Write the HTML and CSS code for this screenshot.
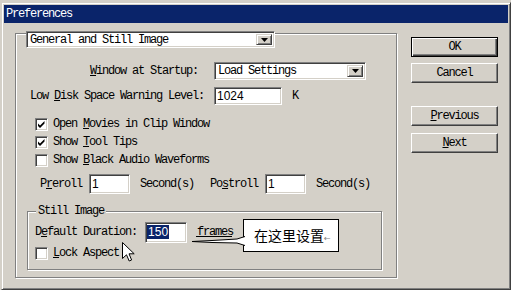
FILE: index.html
```html
<!DOCTYPE html>
<html>

<head>
	<meta charset="utf-8">
	<link rel="stylesheet" href="styles.css">
</head>

<body>
	<div class="window">
		<div class="titlebar">Preferences</div>
		<div class="client">
			<div class="panel">
				<div class="combo section-combo">
					<span class="combo-text">General and Still Image</span>
					<span class="drop"><svg width="7" height="4" viewBox="0 0 7 4"><path d="M0 0h7L3.5 4z" fill="#000"/></svg></span>
				</div>
				<div class="row startup">
					<span class="label"><u>W</u>indow at Startup:</span>
					<div class="combo startup-combo">
						<span class="combo-text">Load Settings</span>
						<span class="drop"><svg width="7" height="4" viewBox="0 0 7 4"><path d="M0 0h7L3.5 4z" fill="#000"/></svg></span>
					</div>
				</div>
				<div class="row disk">
					<span class="label">Low <u>D</u>isk Space Warning Level:</span>
					<span class="field disk-field">1024</span>
					<span class="unit">K</span>
				</div>
				<div class="checks">
					<div class="check">
						<span class="box"><svg width="9" height="9" viewBox="0 0 9 9"><path d="M1 3.5L3 5.5L7.5 1V3.5L3 8L1 6z" fill="#000"/></svg></span>
						<span>Open <u>M</u>ovies in Clip Window</span>
					</div>
					<div class="check">
						<span class="box"><svg width="9" height="9" viewBox="0 0 9 9"><path d="M1 3.5L3 5.5L7.5 1V3.5L3 8L1 6z" fill="#000"/></svg></span>
						<span>Show <u>T</u>ool Tips</span>
					</div>
					<div class="check">
						<span class="box"></span>
						<span>Show <u>B</u>lack Audio Waveforms</span>
					</div>
				</div>
				<div class="row roll">
					<span>P<u>r</u>eroll</span>
					<span class="field roll-field">1</span>
					<span class="seconds">Second(s)</span>
					<span class="postroll">Po<u>s</u>troll</span>
					<span class="field roll-field">1</span>
					<span class="seconds">Second(s)</span>
				</div>
				<div class="group">
					<span class="legend">Still Image</span>
					<div class="row duration">
						<span>D<u>e</u>fault Duration:</span>
						<span class="field duration-field"><span class="selected">150</span></span>
						<span class="frames">frames</span>
					</div>
					<div class="check lock">
						<span class="box"></span>
						<span><u>L</u>ock Aspect</span>
					</div>
				</div>

				<svg class="cursor" width="13" height="20" viewBox="0 0 13 20"><path d="M0.5 0.5V16.5L4.5 12.8L7.2 19L9.6 18L7 11.8H12.2z" fill="#fff" stroke="#000" stroke-linejoin="miter"/></svg>
				<div class="callout">在这里设置<span class="mark">←</span></div>
				<svg class="leader" width="58" height="16" viewBox="0 0 58 16">
					<path d="M2 8.5L22 7.5L47 6L55 3.5V12.5L47 10L22 9.5z" fill="#fff"/>
					<path d="M2 8.5L22 7.5L47 6L55 3.5M2 8.5L22 9.5L47 10L55 12.5M6 3.5H42" fill="none" stroke="#000"/>
				</svg>
			</div>
			<div class="buttons">
				<div class="btn default">OK</div>
				<div class="btn cancel">Cancel</div>
				<div class="btn previous"><u>P</u>revious</div>
				<div class="btn next"><u>N</u>ext</div>
			</div>
		</div>
	</div>
</body>

</html>
```

FILE: styles.css
```css
body {
	margin: 0;
	background-color: #d4d0c8;
	width: 511px;
	height: 290px;
	overflow: hidden;
}

.window {
	box-sizing: border-box;
	margin: 2px 0 0 1px;
	width: 510px;
	height: 288px;
	padding: 2px;
	border: 1px solid;
	border-color: #d4d0c8 #404040 #404040 #d4d0c8;
	box-shadow: inset 1px 1px #fff, inset -1px -1px #808080;
	font-family: "Liberation Mono", monospace;
	font-size: 12px;
	letter-spacing: -1.2px;
	color: #000;
}

.titlebar {
	height: 18px;
	line-height: 18px;
	padding-left: 2px;
	background-color: #0a246a;
	color: #fff;
}

.client {
	display: flex;
	align-items: flex-start;
}

.panel {
	position: relative;
	box-sizing: border-box;
	margin: 10px 0 0 11px;
	width: 382px;
	height: 245px;
	border: 1px solid #808080;
	box-shadow: inset 1px 1px #fff, 1px 1px #fff;
}

/* sunken controls */
.combo,
.field,
.box {
	box-sizing: border-box;
	background-color: #fff;
	border: 1px solid;
	border-color: #808080 #fff #fff #808080;
	box-shadow: inset 1px 1px #404040, inset -1px -1px #d4d0c8;
}

.combo {
	display: flex;
	align-items: stretch;
	padding: 2px;
}

.combo-text {
	flex: 1;
	padding-left: 1px;
	line-height: 13px;
}

.drop {
	box-sizing: border-box;
	width: 16px;
	display: flex;
	align-items: center;
	justify-content: center;
	background-color: #d4d0c8;
	border: 1px solid;
	border-color: #d4d0c8 #404040 #404040 #d4d0c8;
	box-shadow: inset 1px 1px #fff, inset -1px -1px #808080;
}

.section-combo {
	margin: -3px 0 0 10px;
	width: 249px;
	height: 17px;
}

.row {
	display: flex;
	align-items: center;
}

.startup {
	margin: 14px 0 0 74px;
	height: 18px;
}

.startup .label {
	width: 124px;
}

.startup-combo {
	width: 152px;
	height: 18px;
}

.disk {
	margin: 7px 0 0 14px;
	height: 18px;
}

.disk .label {
	width: 184px;
}

.field {
	height: 18px;
	padding: 0 2px;
	font-family: "Liberation Sans", sans-serif;
	font-size: 12px;
	letter-spacing: 0;
	line-height: 16px;
}

.disk-field {
	width: 68px;
}

.unit {
	margin-left: 10px;
}

.checks {
	margin: 10px 0 0 19px;
}

.check {
	display: flex;
	align-items: center;
	gap: 5px;
	height: 18px;
}

.box {
	width: 13px;
	height: 13px;
	padding: 1px;
	display: flex;
}

.roll {
	margin: 5px 0 0 24px;
	height: 20px;
}

.roll-field {
	margin-left: 7px;
	width: 41px;
	height: 20px;
	line-height: 18px;
}

.seconds {
	margin-left: 10px;
}

.postroll {
	margin-left: 16px;
}

.group {
	box-sizing: border-box;
	margin: 17px 0 0 11px;
	width: 355px;
	height: 59px;
	padding-left: 7px;
	border: 1px solid #808080;
	box-shadow: inset 1px 1px #fff, 1px 1px #fff;
}

.legend {
	display: table;
	margin: -7px 0 0 1px;
	padding: 0 2px;
	line-height: 12px;
	background-color: #d4d0c8;
}

.duration {
	margin-top: 5px;
	height: 20px;
}

.duration-field {
	margin-left: 8px;
	width: 42px;
	height: 21px;
	padding: 0 0 0 1px;
	line-height: 18px;
}

.selected {
	background-color: #0a246a;
	color: #fff;
	padding: 0 1px;
}

.frames {
	margin-left: 10px;
}

.lock {
	margin-top: 2px;
}

.cursor {
	position: absolute;
	left: 106px;
	top: 208px;
}

.callout {
	position: absolute;
	left: 227px;
	top: 185px;
	box-sizing: border-box;
	width: 96px;
	height: 33px;
	padding-left: 10px;
	border: 1px solid #000;
	background-color: #fff;
	font-family: "Noto Sans CJK SC", sans-serif;
	font-size: 14px;
	letter-spacing: 0;
	line-height: 31px;
}

.callout .mark {
	font-family: "DejaVu Sans", sans-serif;
	font-size: 8px;
	color: #808080;
}

.leader {
	position: absolute;
	left: 174px;
	top: 199px;
}

.buttons {
	display: flex;
	flex-direction: column;
	margin: 14px 0 0 14px;
}

.btn {
	box-sizing: border-box;
	width: 87px;
	height: 20px;
	line-height: 18px;
	text-align: center;
	border: 1px solid;
	border-color: #fff #404040 #404040 #fff;
	box-shadow: inset -1px -1px #808080, inset 1px 1px #d4d0c8;
}

.btn.default {
	border-color: #000;
	box-shadow: inset 1px 1px #fff, inset -1px -1px #404040, inset -2px -2px #808080;
}

.cancel {
	margin-top: 6px;
}

.previous {
	margin-top: 23px;
}

.next {
	margin-top: 7px;
}
```
